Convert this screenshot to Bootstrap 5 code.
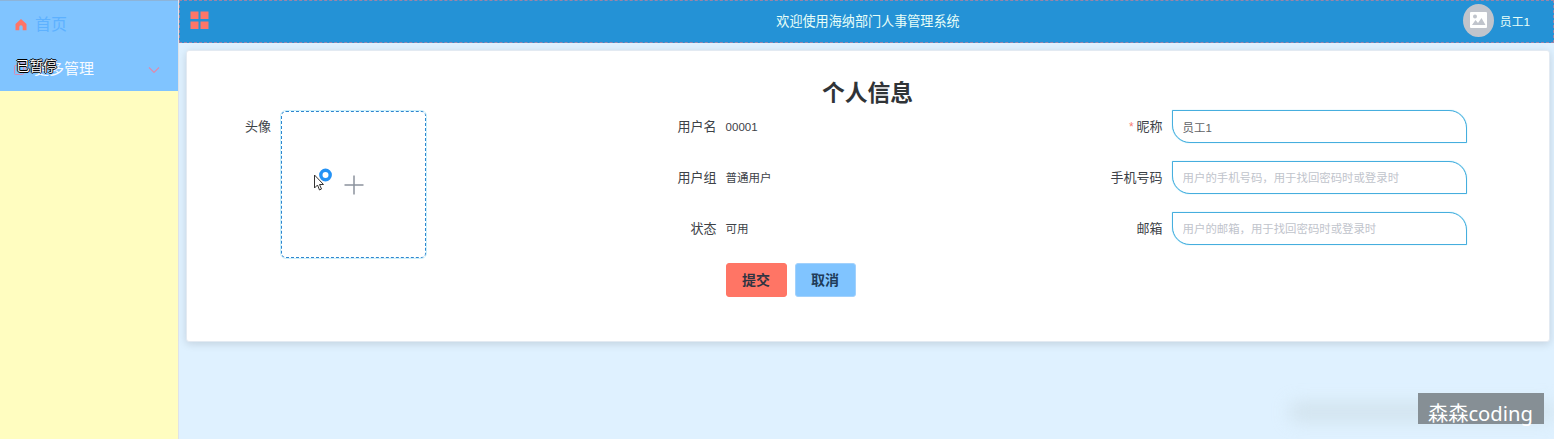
<!DOCTYPE html>
<html lang="zh-CN">
<head>
<meta charset="utf-8">
<title>个人信息</title>
<link href="https://cdn.jsdelivr.net/npm/bootstrap@5.3.0/dist/css/bootstrap.min.css" rel="stylesheet">
<style>
body{font-family:"Liberation Sans","Noto Sans CJK SC",sans-serif;background:#dff1ff;height:439px;overflow:hidden;font-size:13px;line-height:20px;color:#3d4247}
.side{width:179px;background:#fffdc0;border-right:1px solid #dfe3e8}
.side-menu{height:91px;background:#80c4ff;border-top:1px solid #8db4d9;padding-top:1px}
.side-item{height:45px;padding-left:14px;color:#5db1ff;font-size:16px}
.side-item.more{color:#f7fbff;font-size:15px;padding-right:18px;height:43px}
.side-item svg{flex:none;margin-right:7px}
.side-item .chev{margin:2px 0 0 auto}
.paused{left:16px;top:57px;font-size:13.8px;line-height:20px;color:#fff;letter-spacing:-.3px;text-shadow:1px 0 #000,-1px 0 #000,0 1px #000,0 -1px #000}
.topbar{display:grid;grid-template-columns:1fr auto 1fr;align-items:center;height:43px;background:#2492d6;border:1px dashed #9b84a8;padding:0 23px 0 26px;color:#e8fff8}
.menu-toggle{margin:0 0 4px -16px}
.topbar-title{font-size:13.1px}
.user-box{font-size:11.8px}
.avatar{width:31px;height:33px;background:#c0c4cc;margin-right:6px;margin-bottom:3px}
.panel{margin:7px 4px 0 7px;height:292px;background:#fff;border:1px solid #e3eaf2;border-radius:3px;box-shadow:0 2px 9px rgba(0,0,0,.13);padding:26px 0 0 3px}
.panel h1{font-size:22.8px;line-height:33px;font-weight:700;margin:0;color:#303437;padding-right:4px}
.form-grid{display:grid;grid-template-columns:445.6px 446px 446px}
.frow{display:grid;grid-template-columns:80px 295px;column-gap:10px;height:51px}
.flabel{text-align:right;line-height:33px;white-space:nowrap;margin-right:-1px}
.fvalue{font-size:11.5px;line-height:34px}
.req{color:#f77b72;font-size:12px;margin-right:3px}
.form-control.field{height:33px;border:1px solid #46aede;border-radius:0 18px 0 18px;padding:1px 10px 0;font-size:11.4px;color:#606266;background:#fff;box-shadow:0 0 1px #72d2f0}
.field::placeholder{color:#bfc4cc;opacity:1}
.upload{width:147px;height:149px;border:1px solid #c9effb;border-radius:6px}
.upload-inner{width:100%;height:100%;border:1px dashed #2e86cf;border-radius:5px;background:#fff}
.btn.act{height:34px;width:61px;padding:0;font-size:14px;font-weight:700;border-radius:3px;color:#303442}
.act.submit{background:#ff7565;border-color:#ff7565}
.act.cancel{background:#80c4ff;border-color:#a2d1fc;color:#203c5a}
.pointer{left:312px;top:166px}
.smudge{left:1290px;top:403px;width:264px;height:18px;background:#c8d8df;filter:blur(9px);opacity:.6}
.mark-box{left:1418px;top:393px;width:126px;height:31px;background:#868f95;color:#fff;font:20.2px/40px "Noto Sans","Noto Sans CJK SC",sans-serif;padding-left:10px;white-space:nowrap}
</style>
</head>
<body class="d-flex position-relative">
<aside class="side flex-shrink-0">
  <nav class="side-menu">
    <div class="side-item d-flex align-items-center">
      <svg width="14" height="14" viewBox="0 0 14 14"><path d="M7 1 1.500 6v6.300h3.800V9a1.700 1.700 0 0 1 3.400 0v3.300h3.800V6z" fill="#ff7468"/></svg>首页
    </div>
    <div class="side-item more d-flex align-items-center">
      <svg width="13" height="13" viewBox="0 0 13 13" fill="none" stroke="#d98bb0"><rect x=".5" y="3.500" width="9" height="9" rx="1"/><path d="M3 1h9v9"/></svg>更多管理
      <svg class="chev" width="12" height="8" viewBox="0 0 12 8" fill="none" stroke="#dc8bae" stroke-width="1.200"><path d="m1 1.500 5 5 5-5"/></svg>
    </div>
  </nav>
</aside>
<main class="flex-grow-1">
  <header class="topbar">
    <svg class="menu-toggle" width="20" height="20" viewBox="0 0 20 20" fill="#ff7667"><path d="M.5 1.500h8v7.500h-8zM10.500 1.500h8v7.500h-8zM.5 11.500h8v7.500h-8zM10.500 11.500h8v7.500h-8z"/></svg>
    <span class="topbar-title px-1">欢迎使用海纳部门人事管理系统</span>
    <div class="user-box d-flex align-items-center justify-content-end">
      <span class="avatar rounded-circle d-flex align-items-center justify-content-center"><svg width="17" height="16" viewBox="0 0 17 16"><rect width="17" height="16" rx="1" fill="#fff"/><circle cx="5" cy="4.500" r="2" fill="#c0c4cc"/><path d="m2 13 3.500-5 2.500 3 3.500-5 4 7z" fill="#c0c4cc"/></svg></span>
      <span class="user-name">员工1</span>
    </div>
  </header>
  <section class="panel">
    <h1 class="text-center">个人信息</h1>
    <form class="form-grid">
      <div>
        <div class="frow"><span class="flabel">头像</span>
          <div class="upload"><div class="upload-inner d-flex align-items-center justify-content-center"><svg width="20" height="20" viewBox="0 0 20 20" stroke="#8c939d" stroke-width="1.500"><path d="M10 .5v19M.5 10h19"/></svg></div></div></div>
      </div>
      <div>
        <div class="frow"><span class="flabel">用户名</span><span class="fvalue">00001</span></div>
        <div class="frow"><span class="flabel">用户组</span><span class="fvalue">普通用户</span></div>
        <div class="frow"><span class="flabel">状态</span><span class="fvalue">可用</span></div>
        <div class="frow"><span></span><div class="d-flex gap-2"><button type="button" class="btn act submit">提交</button><button type="button" class="btn act cancel">取消</button></div></div>
      </div>
      <div>
        <div class="frow"><label class="flabel"><span class="req">*</span>昵称</label><input class="form-control field" value="员工1"></div>
        <div class="frow"><label class="flabel">手机号码</label><input class="form-control field" placeholder="用户的手机号码，用于找回密码时或登录时"></div>
        <div class="frow"><label class="flabel">邮箱</label><input class="form-control field" placeholder="用户的邮箱，用于找回密码时或登录时"></div>
      </div>
    </form>
  </section>
</main>
<div class="paused position-absolute">已暂停</div>
<svg class="pointer position-absolute" width="22" height="26" viewBox="0 0 22 26"><circle cx="13.500" cy="9" r="4.700" fill="none" stroke="#2492f5" stroke-width="3.400"/><path d="M2.500 9v13l3-3 2 5 2-1-2-4.500h4z" fill="#fff" stroke="#333"/></svg>
<div class="smudge position-absolute"></div>
<div class="mark-box position-absolute">森森coding</div>
<script src="https://cdn.jsdelivr.net/npm/bootstrap@5.3.0/dist/js/bootstrap.bundle.min.js"></script>
</body>
</html>
